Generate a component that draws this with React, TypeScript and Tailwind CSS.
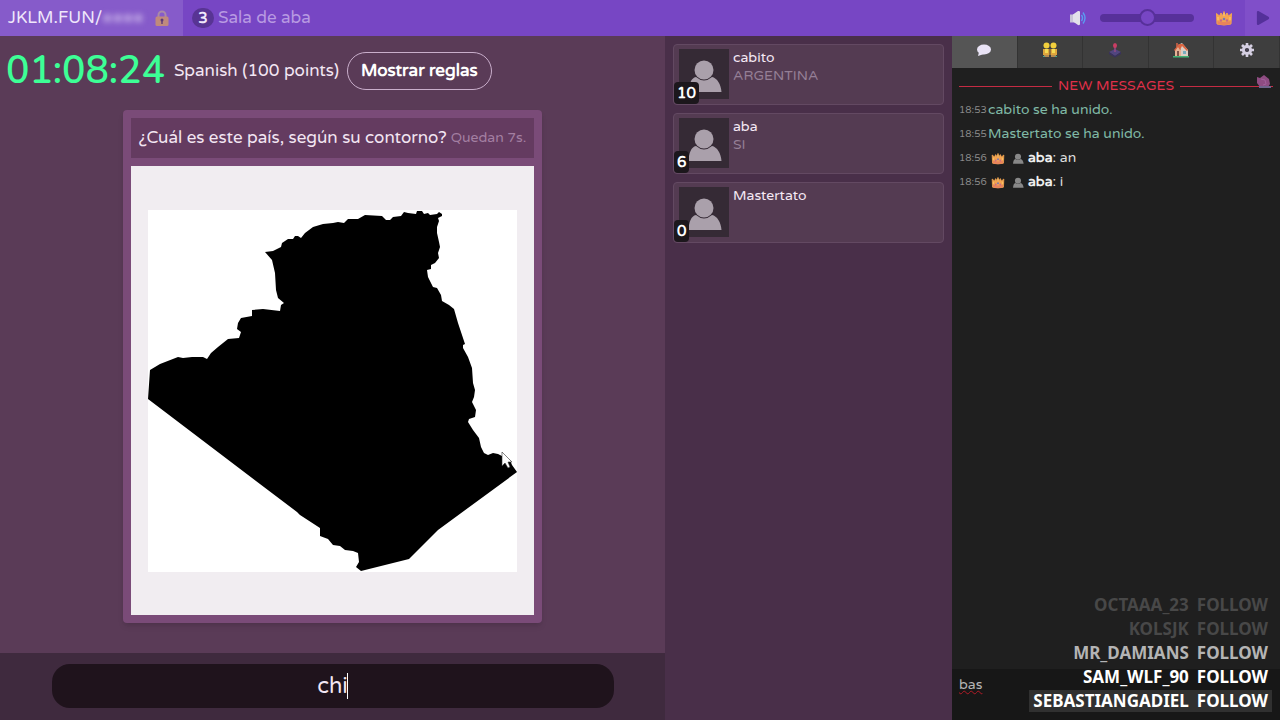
import { useState } from 'react'
import { FaPlay } from 'react-icons/fa'

const players = [
  { name: 'cabito', guess: 'ARGENTINA', score: 10 },
  { name: 'aba', guess: 'SI', score: 6 },
  { name: 'Mastertato', guess: '', score: 0 },
]

const messages = [
  { time: '18:53', text: 'cabito se ha unido.' },
  { time: '18:55', text: 'Mastertato se ha unido.' },
  { time: '18:56', author: 'aba', text: 'an' },
  { time: '18:56', author: 'aba', text: 'i' },
]

const follows = [
  { name: 'OCTAAA_23', className: 'text-[#484848]' },
  { name: 'KOLSJK', className: 'text-[#484848]' },
  { name: 'MR_DAMIANS', className: 'text-[#b4b4b4]' },
  { name: 'SAM_WLF_90', className: 'text-white' },
  { name: 'SEBASTIANGADIEL', className: 'bg-[#303030] text-white' },
]

const COUNTRY =
  'M265 252L273 251 281 247 282 243 288 239 293 239 295 236 298 236 301 238 305 233 313 227 323 224 333 223 338 222 344 223 348 219 358 219 365 215 382 216 386 220 390 220 393 217 401 216 404 212 408 213 416 214 417 211 422 211 424 214 428 213 430 215 437 214 439 212 442 214 442 216 438 218 439 221 437 227 437 233 439 242 440 247 438 253 439 258 435 263 431 265 431 269 427 270 428 277 433 287 437 288 441 295 442 301 449 305 454 309 458 323 465 344 463 345 463 348 468 357 472 368 473 383 475 390 474 397 472 402 476 410 475 417 469 419 468 422 473 430 479 438 481 447 484 453 488 455 493 453 498 454 510 460 512 465 517 472 438 530 409 559 361 571 356 567 359 562 358 553 353 551 345 550 340 546 333 545 328 539 320 536 320 528 300 515 297 512 148 399 150 370 160 364 178 357 183 358 192 357 203 357 207 359 211 353 218 347 228 339 239 338 241 332 237 329 238 323 241 318 252 316 252 310 263 309 280 311 281 305 284 303 278 298 276 290 275 273 272 260Z'

function Crown({ className }: { className: string }) {
  return (
    <svg viewBox="0 0 18 16" className={className} aria-hidden="true">
      <path d="M1.500 3.500L4.500 6 6 3l2 3 1-4.500L10 6l2-3 1.500 3 3-2.500L16 14q-7 2-14 0z" fill="#f3a450" stroke="#f3a450" strokeLinejoin="round" />
      <path d="M2.500 11q6.500 2 13 0v3q-6.500 2-13 0z" fill="#e8835c" />
      <circle cx="6" cy="10.500" r="1.200" fill="#c76a86" />
      <circle cx="9" cy="9" r="1.300" fill="#7c78b0" />
      <circle cx="12" cy="10.500" r="1.200" fill="#c76a86" />
      <path d="M3 7v3M15 7v3M9 3v3" stroke="#ffcf70" />
    </svg>
  )
}

function Person({ className }: { className: string }) {
  return (
    <svg viewBox="0 0 50 50" className={className} fill="currentColor" aria-hidden="true">
      <circle cx="25" cy="21" r="9.500" />
      <path d="M17 28q8 7 16 0c5 1 9 7 9.500 15h-33C10 35 12 29 17 28z" />
    </svg>
  )
}

function Lock() {
  return (
    <svg viewBox="0 0 14 17" className="h-[17px] w-[14px]" aria-hidden="true">
      <path d="M3.500 8V5a3.500 3.500 0 0 1 7 0v3" fill="none" stroke="#a98aa8" strokeWidth="2" />
      <rect x="0.500" y="6.500" width="13" height="9.500" rx="1.500" fill="#c08a7c" />
      <circle cx="7" cy="10" r="1.500" fill="#5d3a78" />
      <path d="M6.300 10h1.400v4H6.300z" fill="#5d3a78" />
    </svg>
  )
}

function Speaker() {
  return (
    <svg viewBox="0 0 18 16" className="h-4 w-[18px]" aria-hidden="true">
      <path d="M1 4.500h5v8H1z" fill="#c9c3d8" />
      <path d="M4 4.500L9 1q2-.5 2 1v12q0 1.500-2 1l-5-3.500z" fill="#e3e0ea" />
      <path d="M12.500 5q2 3 0 6M14 2.500q4 5.500 0 11" fill="none" stroke="#5b9cf0" strokeWidth="1.400" />
    </svg>
  )
}

function Bubble() {
  return (
    <svg viewBox="0 0 16 14" className="h-[14px] w-4" aria-hidden="true">
      <ellipse cx="8" cy="6.500" rx="7" ry="5" fill="#e9e3f5" />
      <path d="M3 9l-1 4 6-2z" fill="#e9e3f5" />
    </svg>
  )
}

function People() {
  return (
    <svg viewBox="0 0 16 16" className="size-4" aria-hidden="true">
      <circle cx="4.500" cy="3.500" r="3" fill="#f2cf3c" />
      <circle cx="11.500" cy="3.500" r="3" fill="#f2cf3c" />
      <path d="M1 7h6.500v6H1zM8.500 7H15v6H8.500z" fill="#dfa63c" />
      <path d="M3 7h3v4H3zM10 7h3v4h-3z" fill="#f4dc55" />
      <path d="M2 13h5v2H2zM9 13h5v2H9z" fill="#b58a52" />
      <path d="M1 14h2v1H1zM13 14h2v1h-2z" fill="#4fa58c" />
    </svg>
  )
}

function Joystick() {
  return (
    <svg viewBox="0 0 16 16" className="size-4" aria-hidden="true">
      <path d="M2 10l6-3 6 3-6 4z" fill="#51457f" />
      <path d="M2 10v2l6 3.500 6-3.500v-2l-6 4z" fill="#38315d" />
      <path d="M7.200 4h1.600v6H7.200z" fill="#8d4a83" />
      <ellipse cx="8" cy="3.500" rx="2" ry="2.600" fill="#c93d63" />
    </svg>
  )
}

function House() {
  return (
    <svg viewBox="0 0 16 16" className="size-4" aria-hidden="true">
      <path d="M3 1h2v4H3z" fill="#b25a45" />
      <path d="M2 8l3-4 3 4v6H2z" fill="#e5b295" />
      <path d="M5 3l4-2 6 7v6H8V8z" fill="#dccfc5" />
      <path d="M1 8l5-6h4l5 6-1 1-5-5-2 4-2-3-3 4z" fill="#da6440" />
      <path d="M10 9h3v3h-3z" fill="#78adc0" />
      <path d="M4 9h2v5H4z" fill="#7b4f47" />
      <path d="M0 14h16v1.500H0z" fill="#43b477" />
    </svg>
  )
}

function Gear() {
  return (
    <svg viewBox="0 0 16 16" className="size-4" aria-hidden="true">
      <path d="M8 1v14M1 8h14M3 3l10 10M13 3L3 13" stroke="#d5cfe2" strokeWidth="2.600" />
      <circle cx="8" cy="8" r="3.600" fill="#39363f" stroke="#d5cfe2" strokeWidth="3" />
      <circle cx="8" cy="8" r="0.800" fill="#5c5570" />
    </svg>
  )
}

function Snail() {
  return (
    <svg viewBox="0 0 16 15" className="absolute right-2 top-[6px] h-[15px] w-4" aria-hidden="true">
      <path d="M1 3l3 1 4-3 5 4 1 5-2 3H4L1 9z" fill="#8f4c82" />
      <path d="M5 5l4 1 1 4-3 1" fill="none" stroke="#a2609a" />
      <path d="M3 13h12" stroke="#70648c" strokeWidth="2" />
    </svg>
  )
}

const tabs = [
  { label: 'Chat', icon: <Bubble /> },
  { label: 'Jugadores', icon: <People /> },
  { label: 'Juego', icon: <Joystick /> },
  { label: 'Sala', icon: <House /> },
  { label: 'Ajustes', icon: <Gear /> },
]

function TopBar() {
  const [volume, setVolume] = useState(50)

  return (
    <header className="flex h-9 shrink-0 items-stretch bg-[#7746c4] text-[17px] text-[#f0e8fb]">
      <div className="flex w-[183px] items-center bg-[#865bca] pl-2">
        <span>JKLM.FUN/</span>
        <span className="mr-3 text-[#cdb8ea] blur-[3px]">●●●●</span>
        <Lock />
      </div>
      <div className="flex flex-1 items-center gap-1 pl-[9px]">
        <span className="flex h-5 w-[22px] items-center justify-center rounded-full bg-[#583494] text-[15px] font-bold">3</span>
        <span className="text-[#b89ae2]">Sala de aba</span>
      </div>
      <div className="flex items-center pb-px">
        <Speaker />
        <input
          type="range"
          aria-label="Volumen"
          value={volume}
          onChange={(e) => setVolume(Number(e.target.value))}
          className="ml-[13px] mr-[21px] h-2 w-[94px] appearance-none rounded-full bg-[#57309a] [&::-webkit-slider-thumb]:size-[17px] [&::-webkit-slider-thumb]:appearance-none [&::-webkit-slider-thumb]:rounded-full [&::-webkit-slider-thumb]:border-2 [&::-webkit-slider-thumb]:border-[#57309a] [&::-webkit-slider-thumb]:bg-[#7746c4]"
        />
        <Crown className="h-4 w-[18px]" />
      </div>
      <button aria-label="Abrir" className="ml-3 flex w-[35px] items-center justify-center bg-[#804fc9] text-sm text-[#54309a]">
        <FaPlay />
      </button>
    </header>
  )
}

function Game() {
  const [answer, setAnswer] = useState('chi')

  return (
    <main className="flex min-w-0 flex-1 flex-col bg-[#5a3b57] text-[#f3e6f3]">
      <div className="flex h-[74px] shrink-0 items-center gap-2 pb-1 pl-[6px]">
        <span className="w-[160px] font-['Nunito','Varela_Round',sans-serif] text-[39px] font-semibold text-[#3dff96]">01:08:24</span>
        <span className="text-[17px]">Spanish (100 points)</span>
        <button className="h-[38px] rounded-full border border-[#c9aecb] px-[13px] text-[17px] font-bold text-white">Mostrar reglas</button>
      </div>

      <section className="relative mx-auto mb-[30px] flex min-h-0 w-[419px] flex-1 flex-col gap-2 rounded bg-[#7a4b78] p-2 shadow-md">
        <div className="flex h-10 items-center justify-center gap-1 whitespace-nowrap bg-[#643b60] text-[17px]">
          <span>¿Cuál es este país, según su contorno?</span>
          <span className="text-sm text-[#a37fa2]">Quedan 7s.</span>
        </div>
        <div className="flex min-h-0 flex-1 items-center justify-center bg-[#f1edf1] px-[17px]">
          <svg viewBox="148 210 369 362" className="w-full bg-white" role="img" aria-label="Contorno">
            <path d={COUNTRY} />
          </svg>
        </div>
        <svg viewBox="0 0 12 18" className="absolute left-[378px] top-[341px] h-[18px] w-3" aria-hidden="true">
          <path d="M1 1v14l3-3 3 5 2-1-2-5h4z" fill="white" stroke="#333" strokeWidth="0.600" />
        </svg>
      </section>

      <form className="flex h-[67px] shrink-0 items-center justify-center bg-[#3f2a3e] pb-[2px]" onSubmit={(e) => e.preventDefault()}>
        <div className="relative w-[562px]">
          <input
            aria-label="Respuesta"
            value={answer}
            onChange={(e) => setAnswer(e.target.value)}
            className="h-11 w-full rounded-[18px] bg-[#1f131c] text-center text-[22px] outline-none"
          />
          <span className="absolute left-[295px] top-[9px] h-[26px] w-px bg-white" />
        </div>
      </form>
    </main>
  )
}

function Players() {
  return (
    <aside className="flex w-[287px] shrink-0 flex-col gap-2 bg-[#492f49] px-2 pt-2">
      {players.map((p) => (
        <div key={p.name} className="relative flex h-[61px] gap-1 rounded border border-[#634962] bg-[#543b52] px-[5px] py-1 text-sm leading-[18px]">
          <Person className="size-[50px] bg-[#352a35] text-[#aaa0ab]" />
          <div>
            <div className="text-[#f5e9f5]">{p.name}</div>
            <div className="text-[#957f96]">{p.guess}</div>
          </div>
          <span className="absolute bottom-0 left-0 rounded bg-[#1c171c] px-[3px] text-[15px] font-bold leading-[22px] text-white">{p.score}</span>
        </div>
      ))}
    </aside>
  )
}

function Chat() {
  const [draft, setDraft] = useState('bas')

  return (
    <aside className="relative flex w-[328px] shrink-0 flex-col bg-[#1f1f1f] text-sm text-[#ddd]">
      <nav className="flex h-8 shrink-0">
        {tabs.map((tab, i) => (
          <button
            key={tab.label}
            aria-label={tab.label}
            className={`flex flex-1 items-center justify-center border-r border-[#333] pb-1 ${i === 0 ? 'bg-[#555]' : 'bg-[#3e3e3e]'}`}
          >
            {tab.icon}
          </button>
        ))}
      </nav>

      <div className="relative flex-1 px-[7px] pt-[6px]">
        <Snail />
        <div className="flex h-6 items-center gap-[6px] text-[#e0304a]">
          <span className="h-px flex-1 bg-[#c52b43]" />
          NEW MESSAGES
          <span className="h-px flex-1 bg-[#c52b43]" />
        </div>
        {messages.map((m, i) => (
          <div key={i} className="flex h-6 items-center">
            <span className="w-[29px] text-[10px] text-[#888]">{m.time}</span>
            {m.author ? (
              <>
                <Crown className="ml-[3px] h-[13px] w-[14px]" />
                <Person className="ml-[5px] mr-[2px] size-4 text-[#888]" />
                <span>
                  <span className="font-bold text-[#eee]">{m.author}</span>: {m.text}
                </span>
              </>
            ) : (
              <span className="text-[#80b9a6]">{m.text}</span>
            )}
          </div>
        ))}
      </div>

      <textarea
        aria-label="Mensaje"
        value={draft}
        spellCheck={false}
        onChange={(e) => setDraft(e.target.value)}
        className="block h-[51px] shrink-0 resize-none bg-[#171717] px-[7px] py-[6px] text-[#b5b5b5] underline decoration-[#b01a25] decoration-wavy decoration-1 outline-none"
      />

      <ul className="pointer-events-none absolute bottom-2 right-2 flex flex-col items-end gap-[2px] font-['Noto_Sans',sans-serif] text-[17px] font-bold leading-[22px]">
        {follows.map((f) => (
          <li key={f.name} className={`flex gap-2 px-1 ${f.className}`}>
            <span>{f.name}</span>
            <span>FOLLOW</span>
          </li>
        ))}
      </ul>
    </aside>
  )
}

export default function App() {
  return (
    <div className="flex h-screen flex-col overflow-hidden font-['Varela_Round','Noto_Sans',sans-serif]">
      <TopBar />
      <div className="flex min-h-0 flex-1">
        <Game />
        <Players />
        <Chat />
      </div>
    </div>
  )
}
